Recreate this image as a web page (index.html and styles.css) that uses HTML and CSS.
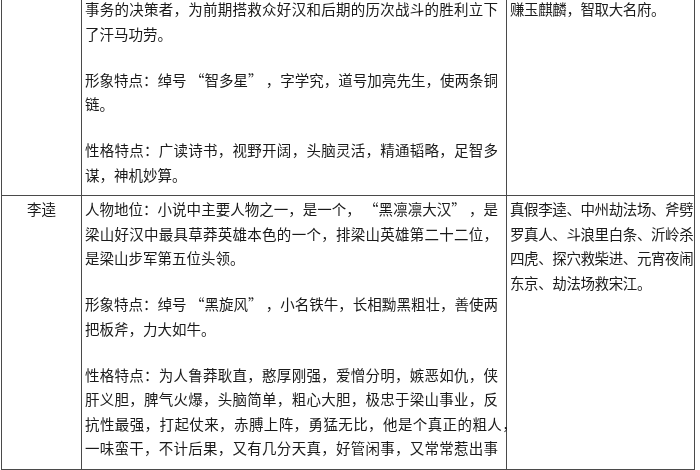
FILE: index.html
```html
<!DOCTYPE html>
<html lang="zh-CN">
<head>
<meta charset="utf-8">
<title>水浒人物</title>
<link rel="stylesheet" href="styles.css">
</head>
<body>
<div class="sheet">
  <table class="roster">
    <colgroup>
      <col class="col-name">
      <col class="col-desc">
      <col class="col-story">
    </colgroup>
    <tr class="row-first">
      <td class="name"></td>
      <td class="desc">
        <p><span class="ln">事务的决策者，为前期搭救众好汉和后期的历次战斗的胜利立下</span>了汗马功劳。</p>
        <p><span class="ln">形象特点：绰号 “智多星” ，字学究，道号加亮先生，使两条铜</span>链。</p>
        <p><span class="ln">性格特点：广读诗书，视野开阔，头脑灵活，精通韬略，足智多</span>谋，神机妙算。</p>
      </td>
      <td class="story"><p>赚玉麒麟，智取大名府。</p></td>
    </tr>
    <tr>
      <td class="name">李逵</td>
      <td class="desc">
        <p><span class="ln">人物地位：小说中主要人物之一，是一个， “黑凛凛大汉” ，是</span><span class="ln">梁山好汉中最具草莽英雄本色的一个，排梁山英雄第二十二位，</span>是梁山步军第五位头领。</p>
        <p><span class="ln">形象特点：绰号 “黑旋风” ，小名铁牛，长相黝黑粗壮，善使两</span>把板斧，力大如牛。</p>
        <p><span class="ln">性格特点：为人鲁莽耿直，憨厚刚强，爱憎分明，嫉恶如仇，侠</span><span class="ln">肝义胆，脾气火爆，头脑简单，粗心大胆，极忠于梁山事业，反</span><span class="wide">抗性最强，打起仗来，赤膊上阵，勇猛无比，他是个真正的粗人，</span><span class="ln">一味蛮干，不计后果，又有几分天真，好管闲事，又常常惹出事</span></p>
      </td>
      <td class="story"><p>真假李逵、中州劫法场、斧劈<br>罗真人、斗浪里白条、沂岭杀<br>四虎、探穴救柴进、元宵夜闹<br>东京、劫法场救宋江。</p></td>
    </tr>
  </table>
</div>
</body>
</html>
```

FILE: styles.css
```css
html, body {
  margin: 0;
  padding: 0;
  background: #ffffff;
}

.sheet {
  width: 700px;
  height: 470px;
  overflow: hidden;
  background: #ffffff;
}

.roster {
  margin: -3px 0 0 1px;
  width: 693px;
  table-layout: fixed;
  border-collapse: collapse;
  font-family: "Noto Sans CJK SC", "Noto Sans", sans-serif;
  font-size: 14.5px;
  line-height: 24.5px;
  color: #1a1a1a;
  filter: blur(0.45px);
}

.col-name { width: 80px; }
.col-desc { width: 425px; }
.col-story { width: 188px; }

.roster td {
  border: 1.5px solid #4a4a4a;
  vertical-align: top;
  padding: 1px 3px 8px 3px;
  white-space: nowrap;
}

.row-first td {
  border-top: none;
  padding-top: 0;
}

.roster td.name {
  text-align: center;
}

.roster td.desc {
  padding-right: 8px;
}

.roster p {
  margin: 0 0 21.5px 0;
}

.roster p:last-child {
  margin-bottom: 0;
}

.ln {
  display: block;
  text-align: justify;
  text-align-last: justify;
}

.wide {
  display: block;
  letter-spacing: 0.4px;
}

.roster td.story {
  padding-left: 3px;
  letter-spacing: -0.4px;
}
```
